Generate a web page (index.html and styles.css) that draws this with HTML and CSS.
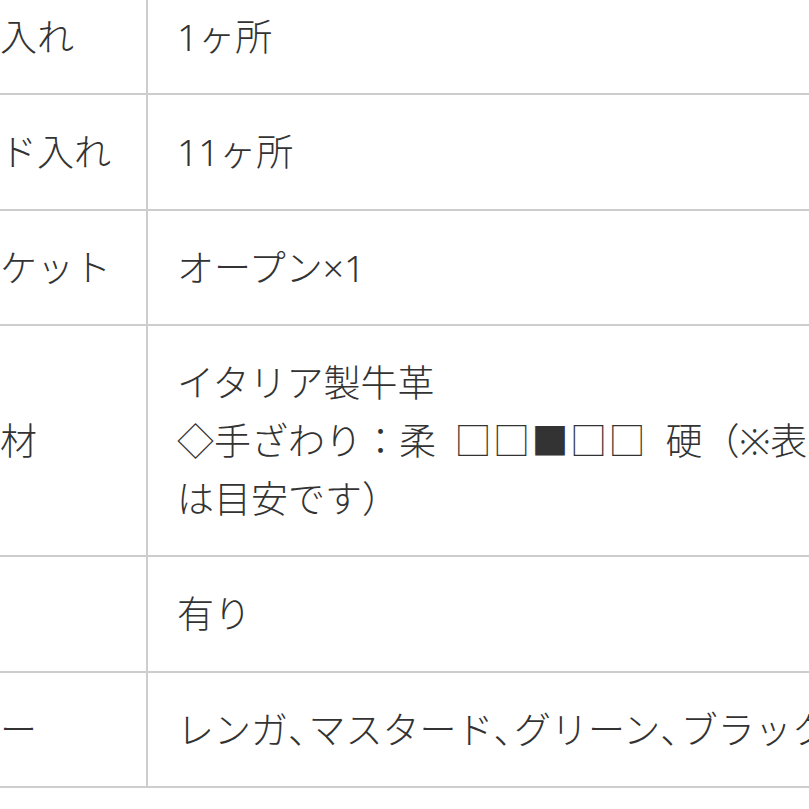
FILE: index.html
```html
<!DOCTYPE html>
<html lang="ja">
<head>
<meta charset="utf-8">
<title>仕様</title>
<link rel="stylesheet" href="styles.css">
</head>
<body>
<table class="spec">
  <colgroup>
    <col class="col-label">
    <col class="col-value">
  </colgroup>
  <tbody>
    <tr><td class="label">小銭入れ</td><td class="value">1ヶ所</td></tr>
    <tr><td class="label">カード入れ</td><td class="value">11ヶ所</td></tr>
    <tr><td class="label">外ポケット</td><td class="value">オープン×1</td></tr>
    <tr><td class="label">主素材</td><td class="value">イタリア製牛革<br>◇手ざわり：柔&ensp;<span class="scale">□□■□□</span>&ensp;硬（※表示は目安です）</td></tr>
    <tr><td class="label">箱</td><td class="value">有り</td></tr>
    <tr><td class="label">カラー</td><td class="value">レンガ<span class="punct">、</span>マスタード<span class="punct">、</span>グリーン<span class="punct">、</span>ブラック</td></tr>
  </tbody>
</table>
</body>
</html>
```

FILE: styles.css
```css
html, body {
  margin: 0;
  padding: 0;
  background: #fff;
  overflow: hidden;
}

.spec {
  border-collapse: separate;
  border-spacing: 0;
  table-layout: fixed;
  width: 980px;
  margin-top: -20px;
  margin-left: -103px;
  font-family: "Noto Sans", "Noto Sans CJK JP", sans-serif;
  font-size: 37px;
  font-weight: 300;
  line-height: 57.6px;
  color: #333;
}

.col-label { width: 251px; }
.col-value { width: 729px; }

.spec td {
  box-sizing: border-box;
  padding: 28px 20px 27.7px 29px;
  border-bottom: 2px solid #cdcdcd;
  vertical-align: middle;
}

.spec td.label {
  border-right: 2px solid #cdcdcd;
  white-space: nowrap;
}

.scale {
  font-family: "Noto Sans CJK JP", sans-serif;
  letter-spacing: 1.5px;
}

.punct {
  font-feature-settings: "halt";
  letter-spacing: 2px;
}
```
